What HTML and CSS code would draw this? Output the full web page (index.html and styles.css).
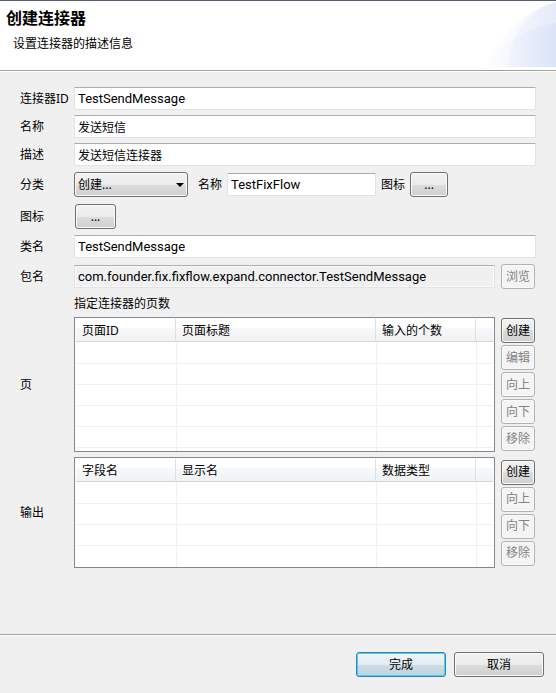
FILE: index.html
```html
<!DOCTYPE html>
<html lang="zh-CN">
<head>
<meta charset="utf-8">
<meta name="viewport" content="width=device-width, initial-scale=1">
<title>创建连接器</title>
<link rel="stylesheet" href="styles.css">
</head>
<body>
<header class="banner">
  <div class="banner-text">
    <h1>创建连接器</h1>
    <p>设置连接器的描述信息</p>
  </div>
  <svg class="banner-art" viewBox="0 0 74 66" aria-hidden="true">
    <defs>
      <linearGradient id="fade" x1="0" x2="74" y1="0" y2="0" gradientUnits="userSpaceOnUse">
        <stop offset="0" stop-color="#cdd8f3" stop-opacity="0"/>
        <stop offset=".4" stop-color="#cdd8f3" stop-opacity=".1"/>
        <stop offset="1" stop-color="#c6d3f2" stop-opacity=".3"/>
      </linearGradient>
      <linearGradient id="fade-inner" x1="24" x2="74" y1="0" y2="0" gradientUnits="userSpaceOnUse">
        <stop offset="0" stop-color="#cdd8f3" stop-opacity=".12"/>
        <stop offset="1" stop-color="#c6d3f2" stop-opacity=".22"/>
      </linearGradient>
    </defs>
    <path d="M0 66H74V1C44 8 20 34 0 66Z" fill="url(#fade)"/>
    <path d="M0 66H74V22C50 25 22 39 0 66Z" fill="url(#fade)"/>
    <path d="M26 66H74V1C46 9 28 34 26 66Z" fill="url(#fade-inner)"/>
  </svg>
</header>

<form class="page" id="connector">
  <label for="connector-id">连接器ID</label>
  <input class="wide latin" id="connector-id" type="text" value="TestSendMessage">

  <label for="name">名称</label>
  <input class="wide" id="name" type="text" value="发送短信">

  <label for="description">描述</label>
  <input class="wide" id="description" type="text" value="发送短信连接器">

  <label for="category">分类</label>
  <div class="wide category">
    <div class="combo">
      <select id="category"><option>创建...</option></select>
      <svg viewBox="0 0 8 4" aria-hidden="true"><path d="M0 0H8L4 4Z"/></svg>
    </div>
    <label for="category-name">名称</label>
    <input class="latin" id="category-name" type="text" value="TestFixFlow">
    <label for="category-icon">图标</label>
    <button class="more" id="category-icon" type="button">...</button>
  </div>

  <label for="icon">图标</label>
  <div class="wide tall">
    <button class="more icon-button" id="icon" type="button">...</button>
  </div>

  <label for="class-name">类名</label>
  <input class="wide latin" id="class-name" type="text" value="TestSendMessage">

  <label for="package">包名</label>
  <input class="latin" id="package" type="text" readonly value="com.founder.fix.fixflow.expand.connector.TestSendMessage">
  <div class="actions tall"><button type="button" disabled>浏览</button></div>

  <p class="caption">指定连接器的页数</p>

  <span>页</span>
  <div class="list list-pages">
    <table>
      <colgroup><col class="narrow"><col><col class="narrow"><col class="rest"></colgroup>
      <thead><tr><th>页面ID</th><th>页面标题</th><th>输入的个数</th><td></td></tr></thead>
      <tbody>
        <tr><td></td><td></td><td></td><td></td></tr>
        <tr><td></td><td></td><td></td><td></td></tr>
        <tr><td></td><td></td><td></td><td></td></tr>
        <tr><td></td><td></td><td></td><td></td></tr>
        <tr><td></td><td></td><td></td><td></td></tr>
        <tr><td></td><td></td><td></td><td></td></tr>
      </tbody>
    </table>
  </div>
  <div class="actions">
    <button type="button">创建</button>
    <button type="button" disabled>编辑</button>
    <button type="button" disabled>向上</button>
    <button type="button" disabled>向下</button>
    <button type="button" disabled>移除</button>
  </div>

  <span>输出</span>
  <div class="list list-output">
    <table>
      <colgroup><col class="narrow"><col><col class="narrow"><col class="rest"></colgroup>
      <thead><tr><th>字段名</th><th>显示名</th><th>数据类型</th><td></td></tr></thead>
      <tbody>
        <tr><td></td><td></td><td></td><td></td></tr>
        <tr><td></td><td></td><td></td><td></td></tr>
        <tr><td></td><td></td><td></td><td></td></tr>
        <tr><td></td><td></td><td></td><td></td></tr>
      </tbody>
    </table>
  </div>
  <div class="actions">
    <button type="button">创建</button>
    <button type="button" disabled>向上</button>
    <button type="button" disabled>向下</button>
    <button type="button" disabled>移除</button>
  </div>
</form>

<footer class="footer">
  <button class="default" type="submit" form="connector">完成</button>
  <button type="button">取消</button>
</footer>
</body>
</html>
```
FILE: styles.css
```css
* {
  box-sizing: border-box;
}

body {
  margin: 0;
  min-height: 100vh;
  display: flex;
  flex-direction: column;
  background: #f0f0f0;
  color: #000;
  font: 12px/16px "Noto Sans", "Noto Sans CJK SC", sans-serif;
}

h1,
p {
  margin: 0;
}

.banner {
  display: flex;
  justify-content: space-between;
  height: 72px;
  background: #fff;
  border-top: 1px solid #566173;
  border-bottom: 1px solid #fff;
  box-shadow: inset 0 -1px #a0a0a0;
}

.banner-text {
  padding: 7px 6px;
}

.banner h1 {
  font-size: 16px;
  line-height: 20px;
}

.banner p {
  padding: 8px 7px;
}

.banner-art {
  width: 74px;
  height: 66px;
}

.page {
  flex: 1;
  display: grid;
  grid-template-columns: 49px 1fr 36px;
  align-content: start;
  align-items: center;
  gap: 5px;
  padding: 15px 20px;
}

label {
  white-space: nowrap;
}

.wide {
  grid-column: 2 / -1;
}

input,
select,
button {
  margin: 0;
  font: inherit;
  color: inherit;
}

input {
  width: 100%;
  min-width: 0;
  height: 23px;
  padding: 0 3px;
  background: #fff;
  border: 1px solid #e2e3ea;
  border-top-color: #abadb3;
  border-radius: 1px;
}

input.latin {
  font-family: Roboto, "Noto Sans CJK SC", sans-serif;
  font-size: 13px;
}

input[readonly] {
  background: #f0f0f0;
  box-shadow: inset 0 0 0 1px #fafafa;
}

button,
select {
  height: 25px;
  padding: 0;
  border: 1px solid #707070;
  border-radius: 3px;
  background: linear-gradient(#f2f2f2 0%, #ebebeb 50%, #dddddd 50%, #cfcfcf 100%);
  box-shadow: inset 0 0 0 1px #fafafa;
}

button:disabled {
  color: #838383;
  background: #f4f4f4;
  border-color: #adb2b5;
}

.category {
  display: flex;
  align-items: center;
  gap: 5px;
  height: 27px;
}

.category input {
  flex: 0 1 149px;
}

.combo {
  display: grid;
  align-items: center;
  width: 114px;
  margin-right: 5px;
}

.combo select,
.combo svg {
  grid-area: 1 / 1;
}

.combo select {
  appearance: none;
  width: 100%;
  padding: 0 3px;
}

.combo svg {
  justify-self: end;
  width: 8px;
  height: 4px;
  margin-right: 4px;
  pointer-events: none;
}

.more {
  width: 38px;
}

.icon-button {
  width: 41px;
  margin: 0 1px;
}

.tall {
  display: flex;
  align-items: center;
  height: 27px;
}

.caption {
  grid-column: 2 / -1;
  line-height: 17px;
}

.actions {
  display: flex;
  flex-direction: column;
  align-items: center;
  justify-content: center;
  gap: 2px;
}

.actions button {
  width: 34px;
}

.list {
  padding: 1px;
  overflow: hidden;
  background: #fff;
  border: 1px solid #828790;
}

.list-pages {
  height: 135px;
}

.list-output {
  height: 111px;
}

table {
  width: 100%;
  table-layout: fixed;
  border-collapse: separate;
  border-spacing: 0;
}

.narrow {
  width: 100px;
}

.rest {
  width: 17px;
}

thead th,
thead td {
  height: 23px;
  padding: 2px 6px 0;
  text-align: left;
  font-weight: normal;
  background: linear-gradient(#fff 40%, #f7f8fa 40%, #f1f2f4);
  border-right: 1px solid #dedfe1;
  border-bottom: 1px solid #d5d5d5;
}

thead td {
  border-right: 0;
}

tbody td {
  height: 21px;
  padding: 0;
  border-bottom: 1px solid #f0f0f0;
}

tbody td + td {
  border-left: 1px solid #f0f0f0;
}

tbody tr:first-child td {
  height: 22px;
}

tbody tr:last-child td {
  border-bottom: 0;
}

.footer {
  display: flex;
  justify-content: flex-end;
  gap: 8px;
  padding: 16px 12px;
  border-top: 1px solid #a0a0a0;
  box-shadow: inset 0 1px #fff;
}

.footer button {
  width: 90px;
  margin-top: 1px;
}

.footer .default {
  border-color: #3c7fb1;
  background: linear-gradient(#eff5f8 0%, #e3edf2 50%, #cddde6 50%, #c0d3df 100%);
  box-shadow: inset 0 0 0 1px #45d2fa;
}
```
